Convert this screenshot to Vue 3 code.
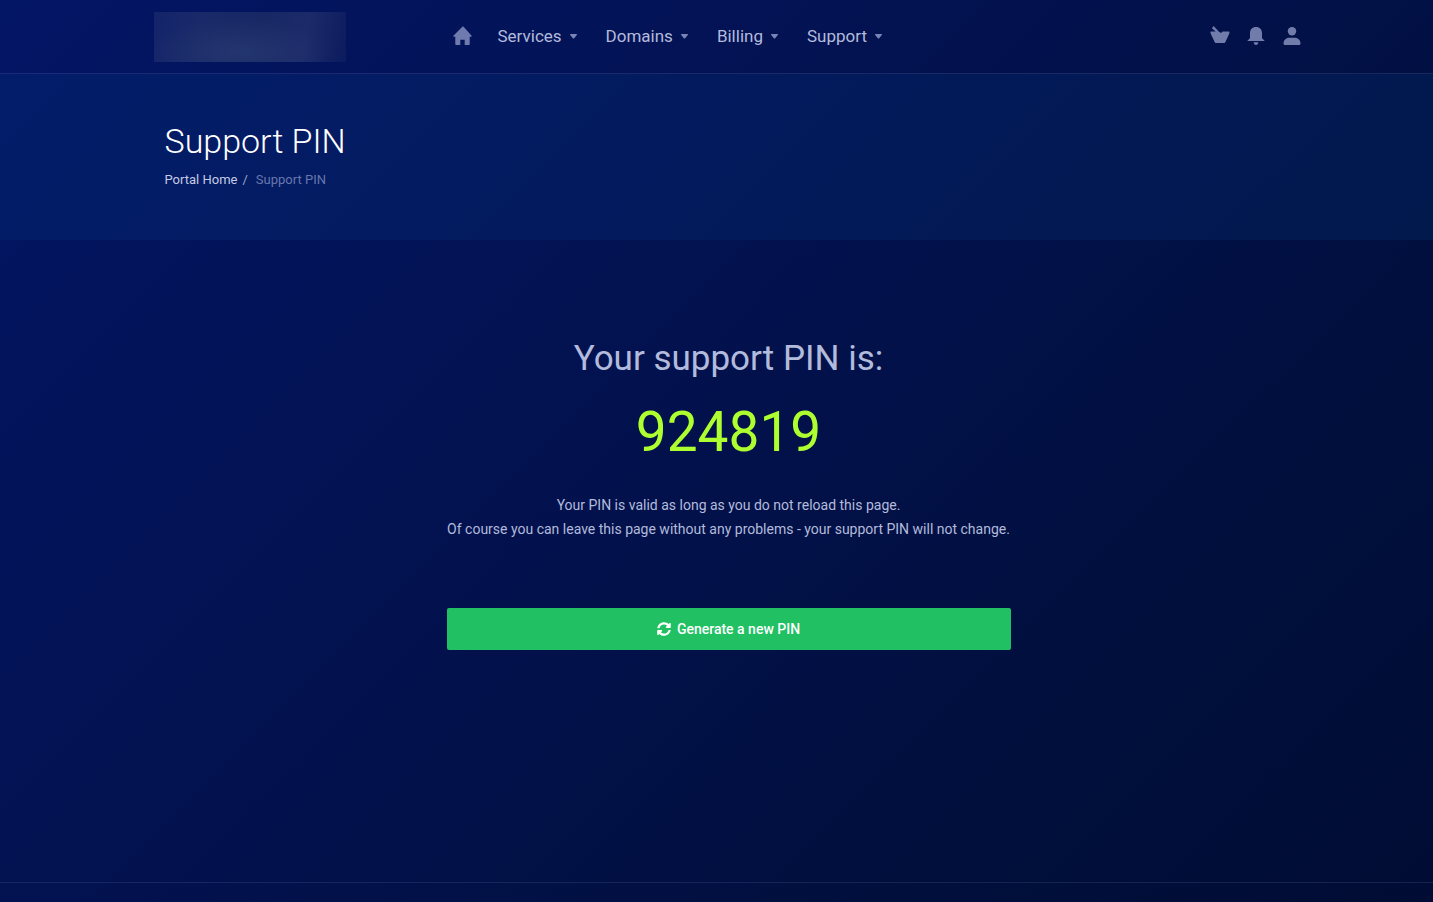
<script setup>
const menus = ['Services', 'Domains', 'Billing', 'Support']

const pin = '924819'
</script>

<template>
  <div class="page">
    <header class="topbar">
      <div class="container topbar-row">
        <a class="logo" href="#" aria-label="Portal home"></a>
        <nav class="menu" aria-label="Main">
          <a class="home" href="#" aria-label="Home">
            <svg width="20" height="20" viewBox="0 0 20 20" fill="currentColor" aria-hidden="true">
              <path d="M10 .5c-.4 0-.7.200-.9.400L.4 9.800c-.3.400-.1.900.4.900h1.500V18c0 .6.4 1 1 1h4v-5.300h4.400V19h4c.6 0 1-.4 1-1v-7.300h1.500c.5 0 .7-.5.4-.9L10.600.8A1 1 0 0 0 10 .5Z" />
            </svg>
          </a>
          <button v-for="name in menus" :key="name" class="menu-item" type="button">
            {{ name }}
            <svg width="7" height="5" viewBox="0 0 7 5" fill="currentColor" aria-hidden="true">
              <path d="M.6 0h5.800c.6 0 .8.700.4 1.100L4.200 4.200a1 1 0 0 1-1.400 0L.2 1.100C-.2.7 0 0 .6 0Z" />
            </svg>
          </button>
        </nav>
        <div class="tools">
          <button type="button" aria-label="Cart">
            <svg width="20" height="20" viewBox="0 0 20 20" fill="currentColor" aria-hidden="true">
              <path d="M2.200 1.800 3.300.5c.3-.3.600-.2.800 0l4.600 5L11 7l1.500-1.500h6.400c.4 0 .7.300.6.700L19.300 7.500l-4 8.700c-.2.5-.5.8-1 .8H5.700c-.5 0-.8-.3-1-.8L.7 7.500.4 6.200c-.1-.4.2-.7.600-.7h4.700L2.200 2.600c-.3-.2-.3-.5 0-.8Z" />
            </svg>
          </button>
          <button type="button" aria-label="Notifications">
            <svg width="20" height="20" viewBox="0 0 20 20" fill="currentColor" aria-hidden="true">
              <path d="M10 1C6.300 1 4 3.600 4 7v4.200c0 1-.5 1.600-1.300 2.200-.8.6-1.200 1-1.200 1.600h17c0-.6-.4-1-1.200-1.600-.8-.6-1.300-1.200-1.300-2.200V7c0-3.400-2.300-6-6-6ZM7.600 16.200c.1 1.600 1.100 2.800 2.400 2.800s2.300-1.200 2.400-2.800Z" />
            </svg>
          </button>
          <button type="button" aria-label="Account">
            <svg width="20" height="20" viewBox="0 0 20 20" fill="currentColor" aria-hidden="true">
              <circle cx="10" cy="5.200" r="4.200" />
              <path d="M1.500 17.500c0-4 3-5.800 6.300-5.800h4.400c3.300 0 6.300 1.800 6.300 5.800 0 .9-.5 1.500-1.500 1.500H3c-1 0-1.500-.6-1.500-1.500Z" />
            </svg>
          </button>
        </div>
      </div>
    </header>

    <section class="hero">
      <div class="container">
        <h1>Support PIN</h1>
        <nav class="crumbs" aria-label="Breadcrumb">
          <a href="#">Portal Home</a>
          <span class="slash">/</span>
          <span class="current">Support PIN</span>
        </nav>
      </div>
    </section>

    <main class="container content">
      <div class="panel">
        <h2>Your support PIN is:</h2>
        <p class="pin">{{ pin }}</p>
        <p class="note">
          Your PIN is valid as long as you do not reload this page.<br />
          Of course you can leave this page without any problems - your support PIN will not change.
        </p>
        <button class="generate" type="button">
          <svg width="14" height="14" viewBox="0 0 512 512" fill="currentColor" aria-hidden="true">
            <path d="M370.700 133.300C339.500 104 298.900 88 255.800 88c-77.500.1-144.300 53.200-162.800 126.900-1.300 5.400-6.100 9.100-11.700 9.100H24.100c-7.500 0-13.200-6.800-11.800-14.200C33.900 94.900 134.800 8 256 8c66.400 0 126.800 26.100 171.300 68.700L463 41C478.100 25.900 504 36.600 504 57.900V192c0 13.300-10.700 24-24 24H345.900c-21.400 0-32.100-25.900-17-41l41.800-41.700zM32 296h134.100c21.400 0 32.100 25.900 17 41l-41.800 41.800c31.300 29.300 71.800 45.300 114.900 45.300 77.400-.1 144.300-53.100 162.800-126.800 1.300-5.400 6.100-9.100 11.700-9.100h57.300c7.500 0 13.200 6.800 11.800 14.200C478.100 417.100 377.200 504 256 504c-66.400 0-126.800-26.100-171.300-68.700L49 471c-15.100 15.100-41 4.400-41-16.900V320c0-13.300 10.700-24 24-24z" />
          </svg>
          Generate a new PIN
        </button>
      </div>
    </main>

    <footer class="footer"></footer>
  </div>
</template>

<style>
body {
  margin: 0;
  background: #000c33;
}
</style>

<style scoped>
.page {
  box-sizing: border-box;
  min-height: 100vh;
  display: flex;
  flex-direction: column;
  font-family: Roboto, "Liberation Sans", sans-serif;
  font-size: 14px;
  line-height: 24px;
  color: #b3bbdc;
  background: linear-gradient(135deg, #031565 0%, #031357 28%, #02114a 52%, #010f3d 76%, #000c33 100%);
}

.container {
  box-sizing: border-box;
  width: 100%;
  max-width: 1176px;
  margin: 0 auto;
  padding: 0 12px 0 36px;
}

button {
  margin: 0;
  padding: 0;
  border: 0;
  background: none;
  color: inherit;
  font: inherit;
  cursor: pointer;
}

a {
  color: inherit;
  text-decoration: none;
}

svg {
  display: block;
}

.topbar {
  padding-bottom: 1px;
  border-bottom: 1px solid rgba(140, 160, 230, 0.16);
}

.topbar-row {
  display: flex;
  align-items: center;
  height: 72px;
  padding: 0 3px 0 25px;
}

.logo {
  width: 192px;
  height: 50px;
  margin-top: 2px;
  background:
    radial-gradient(ellipse at 45% 80%, rgba(44, 62, 116, 0.6), transparent 60%),
    linear-gradient(100deg, #14246a 0%, #192969 25%, #172865 55%, #1c2a6a 78%, #0c1b5e 100%);
}

.menu {
  display: flex;
  align-items: center;
  margin-left: 107px;
  font-size: 17px;
}

.home {
  margin-right: 25px;
  color: #6f7bae;
}

.menu-item {
  display: flex;
  align-items: center;
  gap: 8px;
  margin-right: 29px;
}

.menu-item svg {
  color: #7784b5;
}

.tools {
  display: flex;
  gap: 16px;
  margin-left: auto;
  color: #717cab;
}

.hero {
  padding: 45px 0 48px;
  background: rgba(8, 64, 140, 0.18);
}

h1 {
  margin: 0;
  font-size: 34px;
  font-weight: 300;
  line-height: 44px;
  color: #fff;
}

.crumbs {
  display: flex;
  margin-top: 5px;
  font-size: 13px;
  color: #c5cbe4;
}

.slash {
  margin: 0 8px 0 5px;
  color: #9ba6cd;
}

.current {
  color: #6877ac;
}

.content {
  flex: 1;
}

.panel {
  width: 50%;
  min-width: 564px;
  margin: 0 auto;
  padding-top: 97px;
  text-align: center;
}

h2 {
  margin: 0;
  font-size: 35px;
  font-weight: 400;
  line-height: 44px;
}

.pin {
  margin: 15px 0 0;
  font-size: 55px;
  line-height: 72px;
  color: #adff2f;
}

.note {
  margin: 25px 0 0;
  white-space: nowrap;
}

.generate {
  display: flex;
  align-items: center;
  justify-content: center;
  gap: 6px;
  width: 100%;
  height: 42px;
  margin-top: 67px;
  border-radius: 2px;
  background: #20c063;
  color: #fff;
  font-weight: 500;
}

.footer {
  height: 19px;
  border-top: 1px solid rgba(140, 160, 230, 0.15);
}
</style>
